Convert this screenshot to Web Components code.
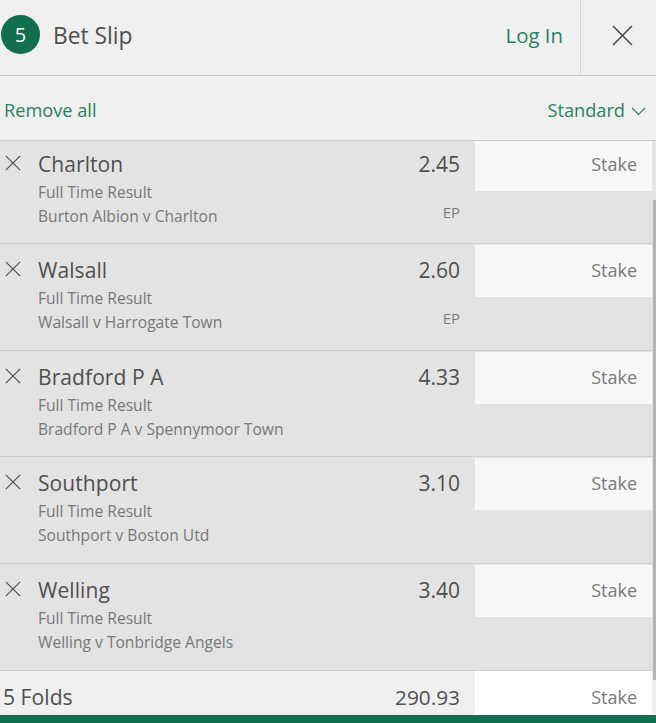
<!DOCTYPE html>
<html>
<head>
<meta charset="utf-8">
<title>Bet Slip</title>
<style>
  html, body { margin: 0; height: 100%; overflow: hidden; background: #f0f0f0; }
  body { font-family: "Open Sans", "Noto Sans", sans-serif; color: #4a4a4a; }
</style>
</head>
<body>
<bet-slip>
  <slip-header slot="header" count="5"></slip-header>
  <slip-toolbar slot="toolbar"></slip-toolbar>
  <bet-row name="Charlton" odds="2.45" market="Full Time Result" fixture="Burton Albion v Charlton" ep first></bet-row>
  <bet-row name="Walsall" odds="2.60" market="Full Time Result" fixture="Walsall v Harrogate Town" ep></bet-row>
  <bet-row name="Bradford P A" odds="4.33" market="Full Time Result" fixture="Bradford P A v Spennymoor Town"></bet-row>
  <bet-row name="Southport" odds="3.10" market="Full Time Result" fixture="Southport v Boston Utd"></bet-row>
  <bet-row name="Welling" odds="3.40" market="Full Time Result" fixture="Welling v Tonbridge Angels"></bet-row>
  <fold-row slot="footer" label="5 Folds" odds="290.93"></fold-row>
</bet-slip>
<script>
const CROSS = size => `<svg width="${size}" height="${size}" viewBox="0 0 20 20" fill="none" stroke="currentColor" stroke-width="1.5"><path d="M1 1L19 19M19 1L1 19"/></svg>`;

class BetSlip extends HTMLElement {
  constructor() {
    super();
    this.attachShadow({ mode: 'open' });
    this.shadowRoot.innerHTML = `<style>
      :host { display: flex; flex-direction: column; position: relative; height: 723px; overflow: hidden; }
      #bar { position: absolute; right: 0; top: 200px; width: 3px; height: 480px; background: #b4b4b4; }
      #confirm { height: 8px; background: #126e51; flex: none; margin-top: auto; }
    </style>
    <slot name="header"></slot>
    <slot name="toolbar"></slot>
    <slot></slot>
    <slot name="footer"></slot>
    <div id="confirm"></div>
    <div id="bar"></div>`;
  }
}

class SlipHeader extends HTMLElement {
  constructor() {
    super();
    this.attachShadow({ mode: 'open' });
    this.shadowRoot.innerHTML = `<style>
      :host { display: flex; align-items: stretch; height: 75px; border-bottom: 1px solid #cfcfcf; flex: none; }
      #count { width: 39px; height: 39px; margin: 15px 13px 0 1px; border-radius: 50%; background: #126e51; color: #fff;
        display: flex; align-items: center; justify-content: center; font-size: 20px; }
      #title { flex: 1; font-size: 22.8px; line-height: 71px; color: #4f4f4f; }
      #login { font-size: 20.4px; line-height: 71px; color: #27815f; padding-right: 17px; }
      #close { width: 76px; box-sizing: border-box; border-left: 1px solid #d6d6d6; padding: 0 0 5px 8px; display: flex;
        align-items: center; justify-content: center; color: #4a4a4a; }
    </style>
    <div id="count"></div>
    <div id="title">Bet Slip</div>
    <div id="login">Log In</div>
    <div id="close">${CROSS(21)}</div>`;
  }
  connectedCallback() {
    this.shadowRoot.querySelector('#count').textContent = this.getAttribute('count');
  }
}

class SlipToolbar extends HTMLElement {
  constructor() {
    super();
    this.attachShadow({ mode: 'open' });
    this.shadowRoot.innerHTML = `<style>
      :host { display: flex; justify-content: space-between; align-items: center; height: 60px; padding: 4px 10px 0 4px;
        border-bottom: 1px solid #cfcfcf; font-size: 18.2px; color: #27815f; flex: none; }
      #mode { display: flex; align-items: center; gap: 6px; }
      svg { margin-top: 2px; }
    </style>
    <div>Remove all</div>
    <div id="mode">Standard
      <svg width="15" height="9" viewBox="0 0 15 9" fill="none" stroke="currentColor" stroke-width="1.2"><path d="M1 1L7.5 7.5L14 1"/></svg>
    </div>`;
  }
}

class BetRow extends HTMLElement {
  constructor() {
    super();
    this.attachShadow({ mode: 'open' });
    this.shadowRoot.innerHTML = `<style>
      :host { display: grid; grid-template-columns: 38px 1fr auto 177px; height: 105.667px; background: #e3e3e3;
        border-bottom: 1px solid #cfcfcf; padding-right: 4px; flex: none; }
      :host([first]) { height: 102px; }
      #remove { color: #4f4f4f; padding: 14px 0 0 5px; line-height: 0; }
      :host(:not([first])) #remove { padding-top: 17px; }
      #info { padding-top: 10px; min-width: 0; }
      :host([first]) #info { padding-top: 7px; }
      #name { font-size: 21px; letter-spacing: .08px; line-height: 33px; margin-bottom: -1px; color: #4f4f4f; }
      .sub { font-size: 15.6px; line-height: 24px; color: #777; }
      #price { text-align: right; padding: 10px 15px 0 0; }
      :host([first]) #price { padding-top: 7px; }
      #odds { font-size: 21px; line-height: 33px; color: #4f4f4f; }
      #ep { font-size: 15px; line-height: 24px; margin-top: 19px; color: #7d7d7d; }
      #stake { background: #f7f7f7; height: 52px; font-size: 18px; line-height: 51px; text-align: right; padding-right: 15px;
        box-sizing: border-box; color: #7a7a7a; margin-top: 1px; }
      :host([first]) #stake { height: 50px; line-height: 46px; margin-top: 0; }
    </style>
    <div id="remove">${CROSS(16)}</div>
    <div id="info">
      <div id="name"></div>
      <div class="sub" id="market"></div>
      <div class="sub" id="fixture"></div>
    </div>
    <div id="price">
      <div id="odds"></div>
      <div id="ep"></div>
    </div>
    <div id="stake">Stake</div>`;
  }
  connectedCallback() {
    for (const key of ['name', 'odds', 'market', 'fixture']) {
      this.shadowRoot.querySelector('#' + key).textContent = this.getAttribute(key);
    }
    if (this.hasAttribute('ep')) this.shadowRoot.querySelector('#ep').textContent = 'EP';
  }
}

class FoldRow extends HTMLElement {
  constructor() {
    super();
    this.attachShadow({ mode: 'open' });
    this.shadowRoot.innerHTML = `<style>
      :host { display: grid; grid-template-columns: 1fr auto 177px; height: 44px; padding-right: 4px; flex: none; overflow: hidden; }
      #label { font-size: 21.2px; line-height: 52px; padding-left: 3px; color: #4f4f4f; }
      #odds { font-size: 20.8px; line-height: 52px; padding-right: 15px; color: #4f4f4f; }
      #stake { background: #fff; font-size: 18px; line-height: 52px; text-align: right; padding-right: 15px; color: #7a7a7a; }
    </style>
    <div id="label"></div>
    <div id="odds"></div>
    <div id="stake">Stake</div>`;
  }
  connectedCallback() {
    this.shadowRoot.querySelector('#label').textContent = this.getAttribute('label');
    this.shadowRoot.querySelector('#odds').textContent = this.getAttribute('odds');
  }
}

if (!customElements.get('bet-slip')) customElements.define('bet-slip', BetSlip);
if (!customElements.get('slip-header')) customElements.define('slip-header', SlipHeader);
if (!customElements.get('slip-toolbar')) customElements.define('slip-toolbar', SlipToolbar);
if (!customElements.get('bet-row')) customElements.define('bet-row', BetRow);
if (!customElements.get('fold-row')) customElements.define('fold-row', FoldRow);
</script>
</body>
</html>
